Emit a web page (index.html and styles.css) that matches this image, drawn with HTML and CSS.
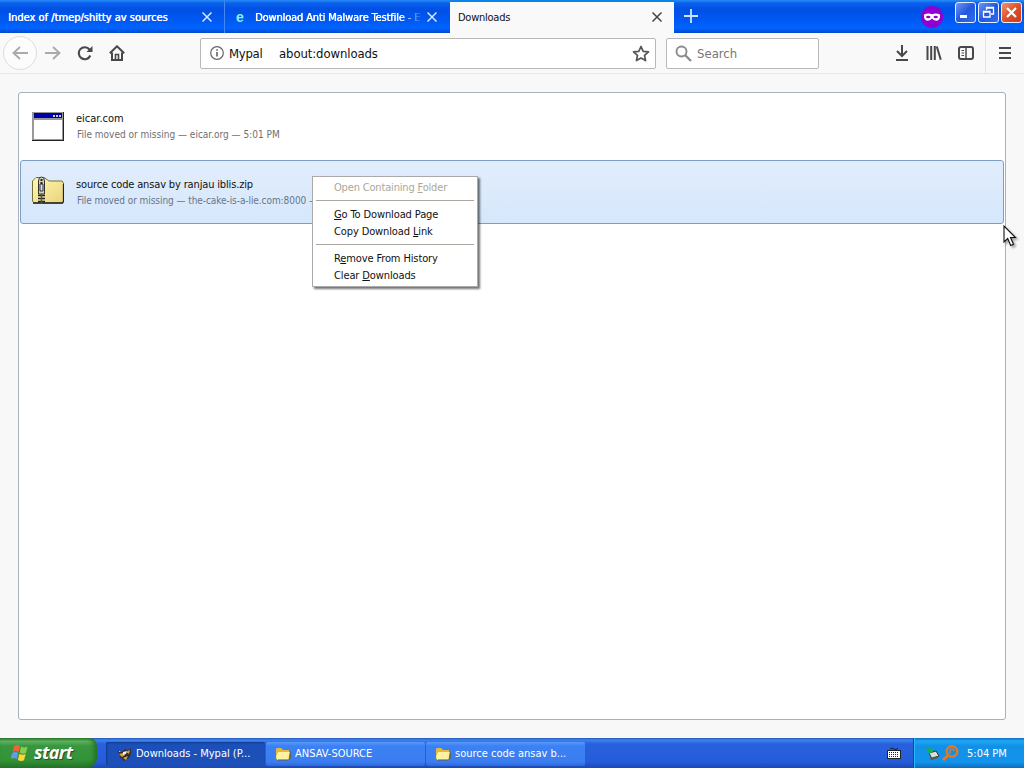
FILE: index.html
```
<!DOCTYPE html>
<html lang="en">
<head>
  <meta charset="UTF-8" />
  <title>Downloads</title>
  <link rel="stylesheet" href="styles.css">
</head>
<body>

  <header class="tabs">
    <div class="tab first">
      <span class="tab-title t1">Index of /tmep/shitty av sources</span>
      <svg class="close" width="10" height="10" viewBox="0 0 10 10"><path d="M.5.5l9 9M9.500.5l-9 9" /></svg>
    </div>
    <div class="tab second">
      <span class="e-icon">e</span>
      <span class="tab-title t2">Download Anti Malware Testfile - E</span>
      <svg class="close" width="10" height="10" viewBox="0 0 10 10"><path d="M.5.5l9 9M9.500.5l-9 9" /></svg>
    </div>
    <div class="tab active">
      <span class="tab-title">Downloads</span>
      <svg class="close" width="10" height="10" viewBox="0 0 10 10"><path d="M.5.5l9 9M9.500.5l-9 9" /></svg>
    </div>
    <svg class="new-tab" width="14" height="14" viewBox="0 0 14 14"><path d="M7 0v14M0 7h14" /></svg>
    <svg class="private" width="22" height="22" viewBox="0 0 22 22">
      <circle cx="11" cy="11" r="11" fill="#8f00d2" />
      <path d="M3 8.500Q7 6.500 11 8.200Q15 6.500 19 8.500Q19.500 14 16 14.800Q13 15 11 12.500Q9 15 6 14.800Q2.500 14 3 8.500z" fill="#fff" />
      <ellipse cx="7.300" cy="11" rx="2.200" ry="1.300" fill="#8f00d2" />
      <ellipse cx="14.700" cy="11" rx="2.200" ry="1.300" fill="#8f00d2" />
    </svg>
    <div class="window-buttons">
      <div class="wb"><svg width="19" height="19" viewBox="0 0 19 19"><path d="M4 13.500h7" stroke="#fff" stroke-width="3" /></svg></div>
      <div class="wb"><svg width="19" height="19" viewBox="0 0 19 19" fill="none" stroke="#fff" stroke-width="1.300"><path d="M7.500 7V4.500h7v6.500H12M7 5h8" /><path d="M4.500 8.500h6.500v5.500H4.500zM4 9h7" /></svg></div>
      <div class="wb red"><svg width="19" height="19" viewBox="0 0 19 19"><path d="M5 5l9 9M14 5l-9 9" stroke="#fff" stroke-width="2.200" /></svg></div>
    </div>
  </header>

  <nav class="toolbar">
    <div class="back">
      <svg width="16" height="14" viewBox="0 0 16 14"><path d="M16 7H1.500M8 1L1.500 7L8 13" /></svg>
    </div>
    <svg class="forward" width="16" height="14" viewBox="0 0 16 14"><path d="M0 7h14.500M8 1l6.500 6L8 13" /></svg>
    <svg class="reload" width="16" height="16" viewBox="0 0 16 16"><path d="M13.300 10.500A6 6 0 1 1 12.500 4.500" fill="none" stroke="#484848" stroke-width="2.100" /><path d="M15.500 1v6h-6z" fill="#484848" /></svg>
    <svg class="home" width="16" height="16" viewBox="0 0 16 16"><path d="M.8 8.300L8 1.300l7.200 7M3 7.500V15h10V7.500" fill="none" stroke="#484848" stroke-width="2" /><path d="M6.500 15V9.500h3V15" fill="none" stroke="#484848" stroke-width="1.600" /></svg>
    <div class="url-bar">
      <svg width="14" height="14" viewBox="0 0 14 14"><circle cx="7" cy="7" r="6.300" fill="none" stroke="#666" stroke-width="1.200" /><path d="M7 6v4.500M7 3.300v1.500" stroke="#555" stroke-width="1.500" /></svg>
      <span class="identity">Mypal</span>
      <span class="url">about:downloads</span>
      <svg class="star" width="18" height="17" viewBox="0 0 18 17"><path d="M9 1.500l2.200 4.800 5.300.6-4 3.500 1.100 5.200L9 13l-4.600 2.600 1.100-5.200-4-3.500 5.300-.6z" fill="none" stroke="#555" stroke-width="1.700" stroke-linejoin="round" /></svg>
    </div>
    <div class="search-bar">
      <svg width="17" height="17" viewBox="0 0 17 17" fill="none" stroke="#8a8a8a"><circle cx="6.500" cy="6.500" r="5" stroke-width="1.900" /><path d="M10 10l6 6" stroke-width="2.300" /></svg>
      <span>Search</span>
    </div>
    <div class="tools">
      <svg width="14" height="16" viewBox="0 0 14 16" fill="none" stroke="#484848" stroke-width="2"><path d="M7 0v11M2 6l5 5 5-5M1 15h12" /></svg>
      <svg class="library" width="16" height="14" viewBox="0 0 16 14" stroke="#484848" stroke-width="2"><path d="M1.500 0v14M5.200 0v14M8.800 0v14M10.800.5l4 13.200" /></svg>
      <svg width="16" height="14" viewBox="0 0 16 14" fill="none" stroke="#484848"><rect x="1" y="1" width="14" height="12" rx="2" stroke-width="2" /><path d="M8 1v12" stroke-width="1.500" /><path d="M3.500 4.500H6M3.500 7H6M3.500 9.500H6" /></svg>
    </div>
    <div class="menu-button">
      <svg width="12" height="12" viewBox="0 0 12 12" stroke="#484848" stroke-width="1.800"><path d="M0 1h12M0 6h12M0 11h12" /></svg>
    </div>
  </nav>

  <main>
    <div class="downloads">
      <div class="download">
        <svg width="32" height="29" viewBox="0 0 32 29" shape-rendering="crispEdges">
          <rect width="32" height="29" fill="#222" />
          <rect width="31" height="28" fill="#999" />
          <rect x="2" y="1" width="28" height="5" fill="#0000a8" />
          <path d="M21 3h2v2h-2zM24 3h2v2h-2zM27 3h2v2h-2z" fill="#ccd" />
          <rect x="2" y="8" width="28" height="19" fill="#fff" />
        </svg>
        <div>
          <p class="name">eicar.com</p>
          <p class="details">File moved or missing — eicar.org — 5:01 PM</p>
        </div>
      </div>
      <div class="download selected">
        <svg width="32" height="28" viewBox="0 0 32 28">
          <defs><linearGradient id="folder" x2="1" y2="1"><stop offset="0" stop-color="#fffab5" /><stop offset="1" stop-color="#ead278" /></linearGradient></defs>
          <path d="M.5 25V5L4 1.500h8L17 5h13l1.500 2v18.500L30 27H2z" fill="url(#folder)" stroke="#77703a" />
          <path d="M1 27h29.500l1-1.500V8" fill="none" stroke="#222" stroke-width="1.300" />
          <path d="M6.500 18V5q0-4 3-4t3 4v13z" fill="#d8d2b5" stroke="#333" />
          <path d="M9.500 3v5" stroke="#222" stroke-width="2" stroke-dasharray="2 1" />
          <path d="M8 8h3v7H8z" fill="#ddd" stroke="#333" />
          <path d="M6 19.500h7M6 22.500h7M6 25.500h7" stroke="#222" stroke-width="1.500" /><path d="M9.500 18v9" stroke="#555" stroke-width="1.500" />
        </svg>
        <div>
          <p class="name">source code ansav by ranjau iblis.zip</p>
          <p class="details">File moved or missing — the-cake-is-a-lie.com:8000 — 5:00 PM</p>
        </div>
      </div>
    </div>
  </main>

  <div class="context-menu">
    <div class="entry disabled">Open Containing <u>F</u>older</div>
    <hr>
    <div class="entry"><u>G</u>o To Download Page</div>
    <div class="entry">Copy Download <u>L</u>ink</div>
    <hr>
    <div class="entry">R<u>e</u>move From History</div>
    <div class="entry">Clear <u>D</u>ownloads</div>
  </div>

  <svg class="cursor" width="14" height="22" viewBox="0 0 14 22"><path d="M1 1v16l3.700-3.500 3 7 2.800-1.200-3-6.800h5z" fill="#fff" stroke="#111" stroke-width="1.100" /></svg>

  <footer class="taskbar">
    <div class="start">
      <svg width="18" height="18" viewBox="0 0 18 18">
        <path d="M3 2q3-2 6 0L7.500 8q-3-1.800-6 0z" fill="#ee6338" />
        <path d="M10 2.500q3 1.700 6.500.2L15 9q-3 1.500-6.300-.3z" fill="#8ccc4c" />
        <path d="M1.200 9q3-1.800 6 0L5.700 15q-3-1.800-6 0z" fill="#6699ee" />
        <path d="M8.400 9.800q3 1.700 6.300.3L13 16.300q-3 1.500-6.200-.3z" fill="#ffd53c" />
      </svg>
      <span>start</span>
    </div>
    <div class="task current">
      <svg width="16" height="16" viewBox="0 0 16 16">
        <path d="M1 5l4 1 3-3 3 2 3-3v5l-2 5-5 3-4-4z" fill="#3a2b22" />
        <path d="M2 8l4-1 2 2-3 2zM9 6l4-2-1 4zM6 12l5-2-2 4z" fill="#d9a650" />
        <path d="M6 6l4-1-1 3-3 1zM2 5l2 1H2z" fill="#eee" />
      </svg>
      <span>Downloads - Mypal (P...</span>
    </div>
    <div class="task">
      <svg width="16" height="14" viewBox="0 0 16 14"><path d="M1 2l1-1h4l2 2h6v10H2L1 11z" fill="#e5b93b" /><path d="M3 5h12l-2 7.500H2L1 10z" fill="#fff2a0" /><path d="M15.300 5v6l-1.800 2H3" fill="none" stroke="#665520" stroke-width=".8" /></svg>
      <span>ANSAV-SOURCE</span>
    </div>
    <div class="task">
      <svg width="16" height="14" viewBox="0 0 16 14"><path d="M1 2l1-1h4l2 2h6v10H2L1 11z" fill="#e5b93b" /><path d="M3 5h12l-2 7.500H2L1 10z" fill="#fff2a0" /><path d="M15.300 5v6l-1.800 2H3" fill="none" stroke="#665520" stroke-width=".8" /></svg>
      <span>source code ansav b...</span>
    </div>
    <svg class="keyboard" width="14" height="12" viewBox="0 0 14 12"><path d="M3 2q2-2 4 0t4-1" fill="none" stroke="#123" /><rect x=".5" y="3.500" width="13" height="8" fill="#fff" stroke="#222" /><path d="M2 5.500h10M2 7.500h10M2 9.500h10" stroke="#222" stroke-dasharray="1 1" /></svg>
    <div class="tray">
      <svg width="15" height="16" viewBox="0 0 15 16"><path d="M4 8l7-2 3 5-7 3z" fill="#ddd" stroke="#333" /><path d="M5 13l7-2 1 2-7 2z" fill="#555" /><path d="M1 3l4 1 2-2 1 5-5 2 1-2z" fill="#18b52c" /></svg>
      <svg width="17" height="16" viewBox="0 0 17 16" fill="none" stroke="#e87722"><circle cx="10" cy="6.500" r="5.300" stroke-width="2.400" /><path d="M8 8.500V6q0-2 2-2t2 2" stroke-width="1.500" /><path d="M6 10.500l-5 4.500" stroke-width="3" /></svg>
      <span>5:04 PM</span>
    </div>
  </footer>

</body>
</html>
```
FILE: styles.css
```
* {
  box-sizing: border-box;
}

body {
  display: flex;
  flex-direction: column;
  height: 768px;
  margin: 0;
  overflow: hidden;
  background: #f8f8f8;
  color: #111;
  font-family: "DejaVu Sans Condensed", "DejaVu Sans", sans-serif;
  font-stretch: condensed;
  font-size: 11px;
  white-space: nowrap;
}

svg {
  flex: none;
}

p {
  margin: 0;
}

/* tab strip */

.tabs {
  display: flex;
  height: 33px;
  background: linear-gradient(#2a8df8 0, #0a62ec 3px, #0050e4 9px, #0058f2 20px, #0064ff 28px, #0048d0 33px);
  color: #fff;
}

.tab {
  display: flex;
  align-items: center;
  justify-content: space-between;
  width: 225px;
  padding: 0 12px 0 8px;
  border-right: 1px solid #4388f4;
}

.tab-title {
  letter-spacing: -0.25px;
}

.t1,
.t2 {
  margin-top: 1px;
  text-shadow: 0.4px 0 #fff;
}

.tab .t1 {
  letter-spacing: 0;
}

.second {
  border-right: 0;
  padding: 0 13px 0 11px;
}

.t2 {
  width: 168px;
  margin-right: 4px;
  letter-spacing: -0.15px;
  -webkit-mask-image: linear-gradient(to right, #000 145px, transparent 168px);
  mask-image: linear-gradient(to right, #000 145px, transparent 168px);
}

.e-icon {
  width: 19px;
  color: #8df0df;
  font: bold 14px "Liberation Sans", sans-serif;
}

.close {
  fill: none;
  stroke: #d8e8ff;
  stroke-width: 1.5;
}

.active {
  width: 224px;
  padding-right: 12px;
  border: 0;
  border-top: 2px solid #0a84e8;
  background: #f9f9fa;
  color: #111;
}

.active .close {
  margin-top: -2px;
  stroke: #444;
}

.new-tab {
  margin: 9px 0 0 10px;
  fill: none;
  stroke: #cfe4ff;
  stroke-width: 1.8;
}

.private {
  margin: 6px 12px 0 auto;
}

.window-buttons {
  display: flex;
  gap: 2px;
  padding: 2px 2px 0 0;
}

.wb {
  width: 21px;
  height: 21px;
  border: 1px solid #e8f0ff;
  border-radius: 3px;
  background: linear-gradient(135deg, #6c98f5, #2458dc 50%, #2e6cf0);
}

.wb.red {
  background: linear-gradient(135deg, #f0946c, #e0502a 50%, #c83c14);
}

/* navigation */

.toolbar {
  display: flex;
  align-items: center;
  height: 41px;
  border-bottom: 1px solid #e6e6e8;
  background: #f9f9fa;
  font-size: 13px;
}

.back {
  display: flex;
  align-items: center;
  justify-content: center;
  width: 34px;
  height: 34px;
  margin-left: 3px;
  border: 1px solid #ddd;
  border-radius: 50%;
  background: #fcfcfc;
}

.back svg,
.forward {
  fill: none;
  stroke: #aaa;
  stroke-width: 1.9;
}

.forward {
  margin-left: 8px;
}

.reload {
  margin-left: 16px;
}

.home {
  margin-left: 16px;
}

.url-bar,
.search-bar {
  display: flex;
  align-items: center;
  height: 31px;
  border: 1px solid #b8b8b8;
  border-radius: 2px;
  background: #fff;
}

.url-bar {
  width: 456px;
  margin-left: 75px;
  padding: 0 5px 0 9px;
}

.identity {
  width: 50px;
  margin-left: 5px;
  letter-spacing: -0.3px;
}

.url {
  letter-spacing: -0.1px;
}

.star {
  margin-left: auto;
}

.search-bar {
  width: 153px;
  margin-left: 10px;
  padding-left: 8px;
  color: #777;
}

.search-bar span {
  margin-left: 5px;
}

.tools {
  display: flex;
  align-items: center;
  gap: 16px;
  margin-left: 76px;
}

.library {
  margin-left: 1px;
}

.menu-button {
  display: flex;
  align-items: center;
  height: 40px;
  margin-left: 11px;
  padding-left: 13px;
  border-left: 1px solid #e4e4e4;
}

/* download list */

main {
  flex: 1;
  padding: 18px;
}

.downloads {
  height: 628px;
  border: 1px solid #a9b0bd;
  border-radius: 3px;
  background: #fff;
}

.download {
  display: flex;
  align-items: center;
  height: 64px;
  margin: 2px 1px 0;
  padding-left: 11px;
  border: 1px solid transparent;
  border-radius: 3px;
}

.download svg {
  margin-top: -2px;
}

.download > div {
  margin-left: 12px;
}

.selected {
  margin-top: 1px;
  border-color: #7e9dc3;
  background: linear-gradient(#e1edfc, #d6e7fb);
}

.name {
  line-height: 16px;
}

.details {
  margin-left: 1px;
  color: #707070;
  font-size: 10px;
  line-height: 16px;
}

.selected svg {
  margin-top: -4px;
}

.selected > div {
  margin-top: 2px;
}

.selected .name {
  letter-spacing: -0.15px;
}

.selected .details {
  color: #66758a;
  letter-spacing: -0.07px;
}

.context-menu {
  position: absolute;
  top: 176px;
  left: 312px;
  width: 166px;
  height: 111px;
  padding: 2px;
  border: 1px solid #aaa;
  background: #fff;
  box-shadow: 2px 2px 2px rgba(0, 0, 0, 0.55);
}

.entry {
  height: 17px;
  padding-left: 19px;
  letter-spacing: -0.12px;
  line-height: 17px;
}

.disabled {
  color: #aaa89b;
  letter-spacing: -0.17px;
}

.context-menu hr {
  margin: 4px 1px 5px;
  border: 0;
  border-top: 1px solid #a8a8a0;
}

.cursor {
  position: absolute;
  top: 225px;
  left: 1003px;
  filter: drop-shadow(2px 2px 1px rgba(0, 0, 0, 0.35));
}

/* taskbar */

.taskbar {
  display: flex;
  align-items: center;
  height: 30px;
  background: linear-gradient(#2457b8 0, #3c83f0 2px, #2860dc 6px, #245cdc 24px, #1c48b4 30px);
  color: #fff;
}

.start {
  display: flex;
  align-items: center;
  width: 97px;
  height: 30px;
  margin-right: 9px;
  padding-left: 11px;
  border-radius: 0 8px 10px 0;
  background: linear-gradient(#2c7a35 0, #61b45e 3px, #389640 8px, #339336 22px, #247428 30px);
  box-shadow: inset -3px 0 4px #25702a;
}

.start span {
  margin: -2px 0 0 5px;
  font: italic bold 18px "Open Sans", sans-serif;
  letter-spacing: -0.6px;
  text-shadow: 1px 1px 1px #254c20;
}

.task {
  display: flex;
  align-items: center;
  width: 159px;
  height: 24px;
  margin: 1px 1px 0 0;
  padding-left: 9px;
  border-radius: 2px;
  background: linear-gradient(#5b99fc, #3c81f3 4px, #3a7df0 20px, #2c67d8);
}

.task span {
  margin-left: 4px;
}

.current {
  padding-left: 11px;
  background: #1c50b8;
  box-shadow: inset 1px 1px 2px #123a8e;
}

.current span {
  margin-left: 3px;
}

.keyboard {
  margin-left: auto;
}

.tray {
  display: flex;
  align-items: center;
  width: 111px;
  height: 30px;
  margin-left: 12px;
  padding-left: 11px;
  border-left: 1px solid #0d49a5;
  background: linear-gradient(#0d6fc4 0, #1ca8f4 3px, #1290e8 8px, #1294ec 24px, #0e6cbc 30px);
  box-shadow: inset 1px 0 #2cb8fa;
}

.tray svg + svg {
  margin-left: 2px;
}

.tray span {
  margin-left: 8px;
}
```
